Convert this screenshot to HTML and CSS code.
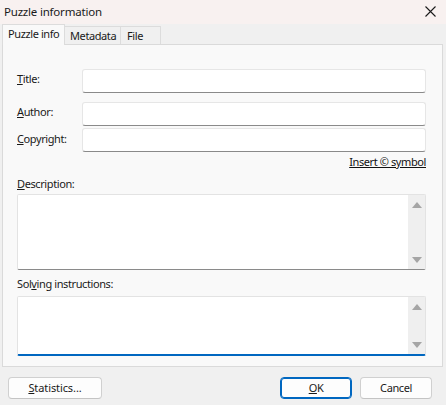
FILE: index.html
```html
<!DOCTYPE html>
<html>
<head>
<meta charset="utf-8">
<link rel="stylesheet" href="styles.css">
</head>
<body>
<div class="window">
  <div class="titlebar">
    <span class="title">Puzzle information</span>
    <svg class="close" width="11" height="11" viewBox="0 0 11 11"><path d="M0.5 0.5 L10.5 10.5 M10.5 0.5 L0.5 10.5" stroke="#1a1a1a" stroke-width="1.1" fill="none"/></svg>
  </div>
  <div class="tabs">
    <div class="tab active">Puzzle info</div>
    <div class="tab t-meta">Metadata</div>
    <div class="tab t-file">File</div>
  </div>
  <div class="panel">
    <div class="field-row r-title"><span class="label"><u>T</u>itle:</span><div class="input"></div></div>
    <div class="field-row r-author"><span class="label"><u>A</u>uthor:</span><div class="input"></div></div>
    <div class="field-row r-copy"><span class="label"><u>C</u>opyright:</span><div class="input"></div></div>
    <div class="link-row"><span class="link">Insert © symbol</span></div>
    <div class="block-label l-desc"><u>D</u>escription:</div>
    <div class="textarea desc">
      <div class="sbar"><span class="arrow up"></span><span class="arrow down"></span></div>
    </div>
    <div class="block-label l-solve">Sol<u>v</u>ing instructions:</div>
    <div class="textarea solve">
      <div class="sbar"><span class="arrow up"></span><span class="arrow down"></span></div>
    </div>
  </div>
  <div class="footer">
    <div class="btn b-stats"><span><u>S</u>tatistics...</span></div>
    <div class="spacer"></div>
    <div class="btn b-ok"><span><u>O</u>K</span></div>
    <div class="btn b-cancel"><span>Cancel</span></div>
  </div>
</div>
</body>
</html>
```
FILE: styles.css
```css
* { box-sizing: border-box; }
html, body { margin: 0; padding: 0; }
body {
  font-family: "Noto Sans", "Open Sans", sans-serif;
  font-size: 11px;
  letter-spacing: -0.4px;
  color: #1a1a1a;
  background: #f0f0f0;
}
.window {
  width: 446px;
  height: 405px;
  background: #f0f0f0;
  display: flex;
  flex-direction: column;
  white-space: nowrap;
}
.titlebar {
  height: 24px;
  background: #f8f1f0;
  display: flex;
  align-items: center;
  padding: 0 10px 0 4px;
}
.title { flex: 1; font-size: 11.5px; letter-spacing: -0.2px; line-height: 16px; }
.close { display: block; margin-top: -1px; }
.tabs {
  height: 20px;
  display: flex;
  align-items: flex-end;
  padding-left: 2px;
}
.tab {
  height: 18px;
  border: 1px solid #dcdcdc;
  border-bottom: none;
  background: #f0f0f0;
  line-height: 17px;
  padding-left: 5px;
}
.tab.active {
  height: 21px;
  width: 63px;
  margin-bottom: -1px;
  background: #f9f9f9;
  position: relative;
  z-index: 1;
  padding-left: 5px;
  line-height: 17px;
}
.t-meta { width: 57px; margin-left: -1px; padding-left: 5px; }
.t-file { width: 41px; margin-left: -1px; padding-left: 6px; }
.panel {
  height: 323px;
  margin: 0 3px 0 2px;
  border: 1px solid #dadada;
  background: #f9f9f9;
  padding: 24px 16px 0 14px;
}
.field-row {
  display: flex;
  align-items: center;
  height: 24px;
}
.r-author { margin-top: 9px; }
.r-copy { margin-top: 2px; }
.label { width: 65px; line-height: 16px; margin-top: -4px; }
.r-copy .label { margin-top: -3px; }
.input {
  flex: 1;
  height: 24px;
  background: #fff;
  border: 1px solid #e6e6e6;
  border-bottom: 1px solid #8a8a8a;
  border-radius: 3px;
}
.link-row {
  display: flex;
  justify-content: flex-end;
  height: 18px;
  line-height: 18px;
  margin-top: 1px;
}
.link { text-decoration: underline; color: #111; }
.block-label { line-height: 16px; }
.l-desc { margin-top: 5px; }
.l-solve { margin-top: 6px; }
.textarea {
  background: #fff;
  border: 1px solid #e3e3e3;
  border-bottom: 1px solid #8a8a8a;
  border-radius: 2px;
  display: flex;
  justify-content: flex-end;
}
.desc { height: 76px; margin-top: 2px; }
.solve { height: 60px; border-bottom: 2px solid #0067c0; margin-top: 4px; }
.sbar {
  width: 17px;
  background: #efefef;
  display: flex;
  flex-direction: column;
  justify-content: space-between;
  align-items: center;
  padding: 7px 0 6px;
}
.arrow {
  width: 0; height: 0;
  border-left: 5px solid transparent;
  border-right: 5px solid transparent;
}
.arrow.up { border-bottom: 6px solid #a5a5a5; }
.arrow.down { border-top: 6px solid #a5a5a5; }
.footer {
  flex: 1;
  display: flex;
  align-items: flex-start;
  padding: 10px 14px 0 8px;
}
.spacer { flex: 1; }
.btn {
  height: 22px;
  background: #fdfdfd;
  border: 1px solid #d0d0d0;
  border-bottom-color: #c4c4c4;
  border-radius: 4px;
  display: flex;
  align-items: center;
  justify-content: center;
  line-height: 16px;
}
.b-stats { width: 94px; }
.b-stats span { letter-spacing: -0.1px; }
.b-ok { width: 72px; border: 1px solid #0067c0; box-shadow: inset 0 0 0 1px #0067c0; }
.b-cancel { width: 72px; margin-left: 8px; }
```
